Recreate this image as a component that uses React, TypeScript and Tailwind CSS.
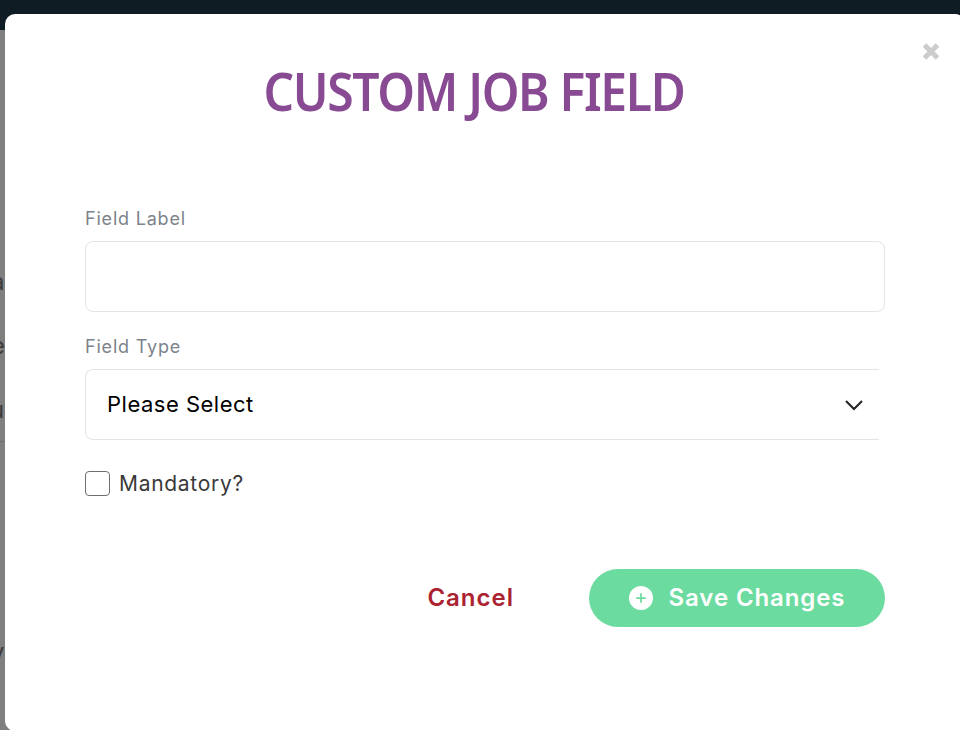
import { Plus } from "lucide-react";

const POPPINS = "font-['Inter','Noto_Sans',sans-serif]";

function BackdropLetters() {
  return (
    <div className="absolute inset-0 bg-[#7f7f7f] overflow-hidden">
      <div className="h-[30px] bg-[#0f1c24]" />
      <div className="font-['Inter',sans-serif] text-[24px] leading-none text-[#3c3c3c]">
        <div className="absolute left-[-9px] top-[270px]">a</div>
        <div className="absolute left-[-9px] top-[334px]">e</div>
        <div className="absolute left-[-10px] top-[398px]">u</div>
        <div className="absolute left-0 top-[441px] h-px w-[5px] bg-[#6f6f6f]" />
        <div className="absolute left-[-9px] top-[640px]">v</div>
      </div>
    </div>
  );
}

export default function App() {
  return (
    <div className="relative h-[730px] w-[960px] overflow-hidden">
      <BackdropLetters />

      {/* Modal */}
      <div className={`absolute left-[5px] top-[14px] h-[717px] w-[960px] rounded-[10px] bg-white px-[80px] ${POPPINS}`}>
        <svg
          className="absolute left-[916px] top-[28px]"
          width="20"
          height="19"
          viewBox="0 0 20 19"
          fill="none"
          aria-label="Close"
        >
          <path d="M3.5 3l13 13M16.5 3l-13 13" stroke="#cccccc" strokeWidth="5" />
        </svg>

        <h1 className="mt-[46px] scale-y-[1.1] pr-[22px] text-center font-['Noto_Sans',sans-serif] text-[48px] leading-[62px] font-semibold tracking-[-1.35px] text-[#884a92]">
          CUSTOM JOB FIELD
        </h1>

        <form className="mt-[83px]">
          <label className="block text-[18px] leading-[27px] text-[#7d848b] tracking-[0.8px]">Field Label</label>
          <input
            type="text"
            className="mt-[9px] block h-[71px] w-full rounded-[8px] border border-[#e3e4e6] bg-white"
          />

          <label className="mt-[21px] block text-[18px] leading-[27px] text-[#7d848b] tracking-[0.8px]">Field Type</label>
          <div className="mt-[9px] flex h-[71px] w-[794px] items-center justify-between rounded-l-[8px] border-y border-l border-[#e3e4e6] pl-[21px] pr-[15px]">
            <span className="text-[22px] tracking-[0.5px] text-black">Please Select</span>
            <svg width="20" height="12" viewBox="0 0 20 12" fill="none" className="text-[#222222]">
              <path d="M2 2l8 8 8-8" stroke="currentColor" strokeWidth="2" />
            </svg>
          </div>

          <label className="mt-[30px] flex items-center gap-[9px]">
            <span className="h-[25px] w-[25px] rounded-[4px] border-[1.5px] border-[#6b6f73] bg-white" />
            <span className="text-[21px] leading-[27px] tracking-[0.7px] text-[#3a3a3a]">Mandatory?</span>
          </label>

          <div className="mt-[72px] flex items-center justify-end">
            <button type="button" className="mr-[75px] text-[24px] font-semibold tracking-[1px] text-[#ab2230]">
              Cancel
            </button>
            <button
              type="button"
              className="flex h-[58px] w-[296px] items-center justify-center gap-[16px] rounded-full bg-[#6bdb9f] text-[24px] font-semibold tracking-[0.9px] text-white"
            >
              <span className="flex h-[24px] w-[24px] items-center justify-center rounded-full bg-white">
                <Plus size={14} strokeWidth={3} className="text-[#6bdb9f]" />
              </span>
              Save Changes
            </button>
          </div>
        </form>
      </div>
    </div>
  );
}
